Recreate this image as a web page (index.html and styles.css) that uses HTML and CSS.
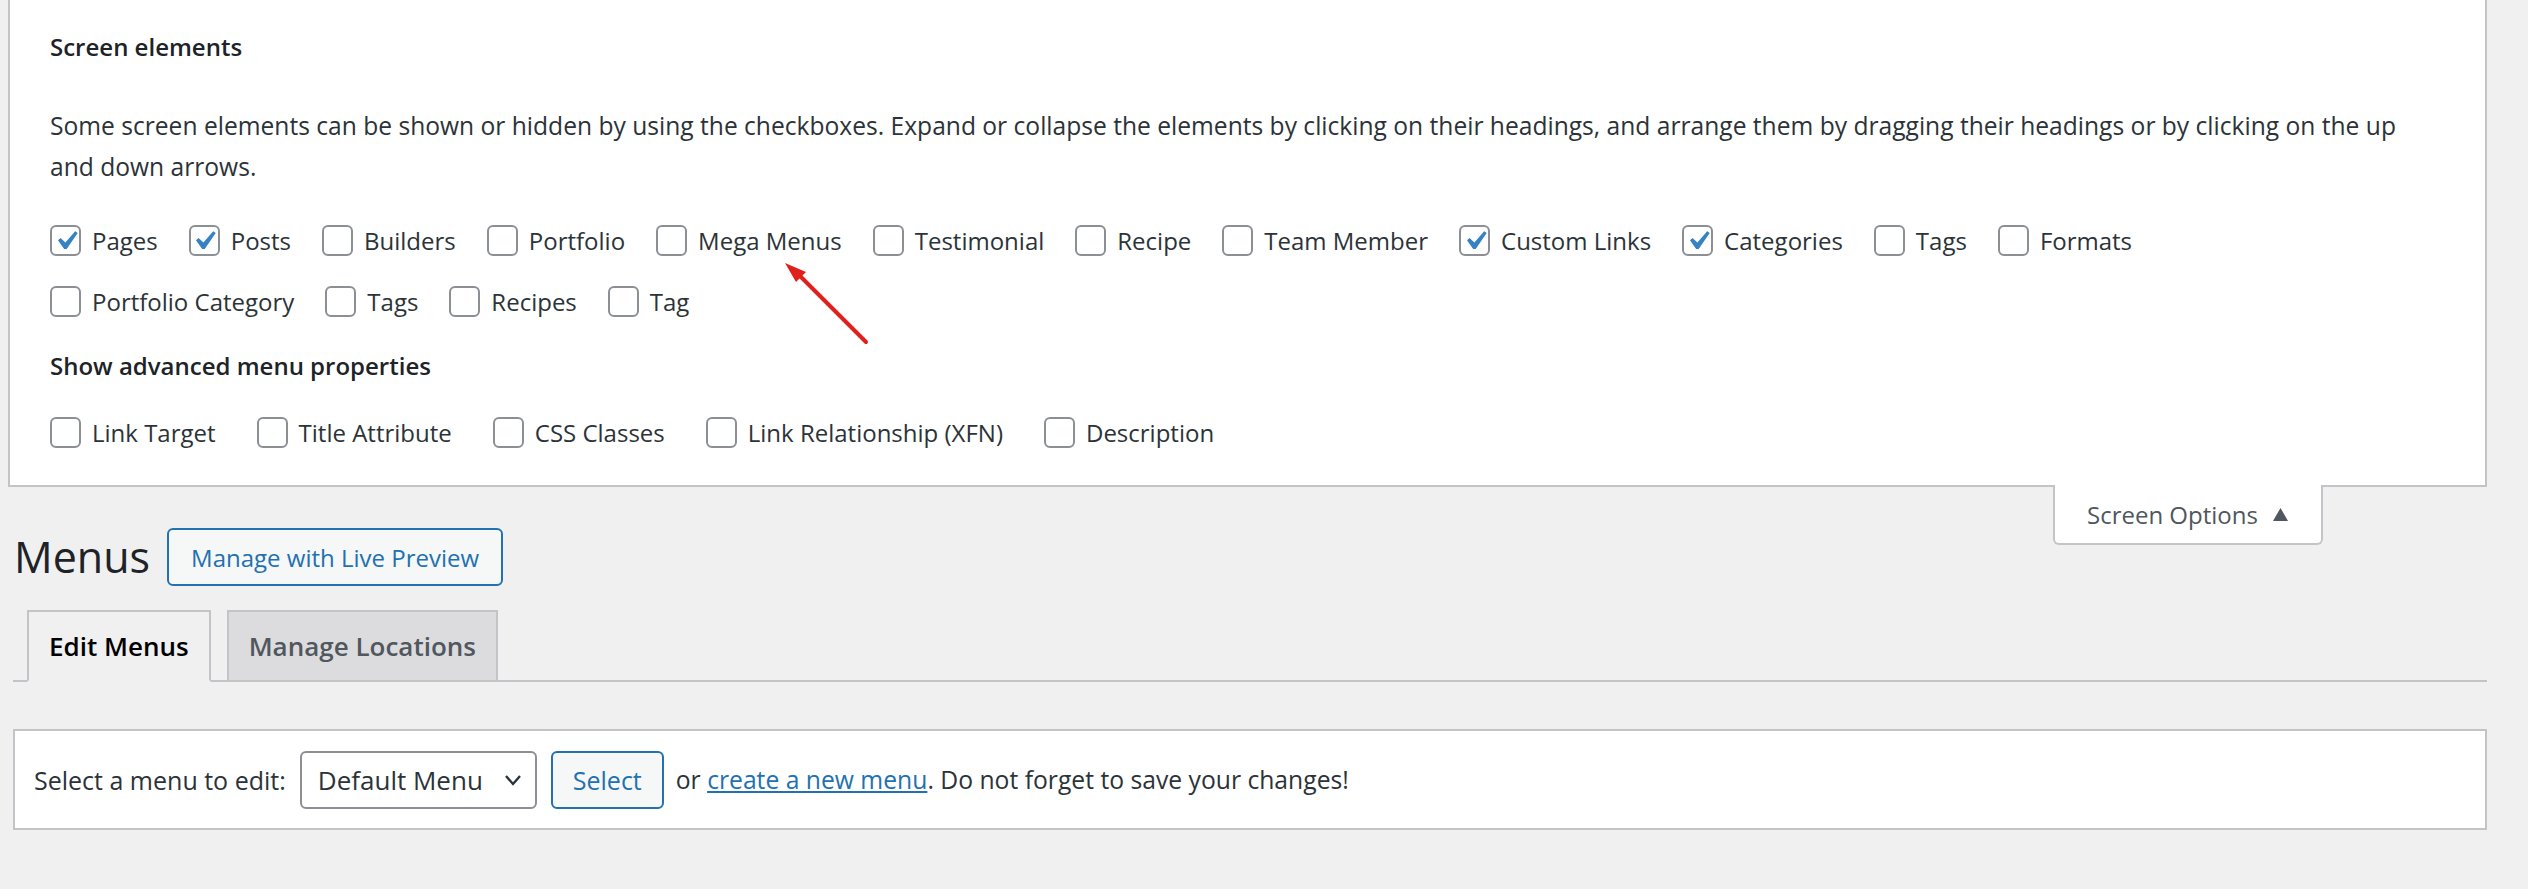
FILE: index.html
```html
<!DOCTYPE html>
<html lang="en">
<head>
<meta charset="utf-8">
<title>Menus</title>
<link rel="stylesheet" href="styles.css">
</head>
<body>
<div class="screen-meta">
  <div class="meta-inner">
    <h5 class="meta-title">Screen elements</h5>
    <p class="meta-desc">Some screen elements can be shown or hidden by using the checkboxes. Expand or collapse the elements by clicking on their headings, and arrange them by dragging their headings or by clicking on the up and down arrows.</p>
    <div class="prefs-row">
      <label class="pref"><span class="cb checked"><svg viewBox="0 0 20 20"><path d="M14.83 4.89l1.34.94-5.81 8.38H9.02L5.78 9.67l1.34-1.25 2.57 2.4z"/></svg></span>Pages</label>
      <label class="pref"><span class="cb checked"><svg viewBox="0 0 20 20"><path d="M14.83 4.89l1.34.94-5.81 8.38H9.02L5.78 9.67l1.34-1.25 2.57 2.4z"/></svg></span>Posts</label>
      <label class="pref"><span class="cb"></span>Builders</label>
      <label class="pref"><span class="cb"></span>Portfolio</label>
      <label class="pref"><span class="cb"></span>Mega Menus</label>
      <label class="pref"><span class="cb"></span>Testimonial</label>
      <label class="pref"><span class="cb"></span>Recipe</label>
      <label class="pref"><span class="cb"></span>Team Member</label>
      <label class="pref"><span class="cb checked"><svg viewBox="0 0 20 20"><path d="M14.83 4.89l1.34.94-5.81 8.38H9.02L5.78 9.67l1.34-1.25 2.57 2.4z"/></svg></span>Custom Links</label>
      <label class="pref"><span class="cb checked"><svg viewBox="0 0 20 20"><path d="M14.83 4.89l1.34.94-5.81 8.38H9.02L5.78 9.67l1.34-1.25 2.57 2.4z"/></svg></span>Categories</label>
      <label class="pref"><span class="cb"></span>Tags</label>
      <label class="pref"><span class="cb"></span>Formats</label>
    </div>
    <div class="prefs-row">
      <label class="pref"><span class="cb"></span>Portfolio Category</label>
      <label class="pref"><span class="cb"></span>Tags</label>
      <label class="pref"><span class="cb"></span>Recipes</label>
      <label class="pref"><span class="cb"></span>Tag</label>
    </div>
    <h5 class="meta-title adv">Show advanced menu properties</h5>
    <div class="prefs-row wide">
      <label class="pref"><span class="cb"></span>Link Target</label>
      <label class="pref"><span class="cb"></span>Title Attribute</label>
      <label class="pref"><span class="cb"></span>CSS Classes</label>
      <label class="pref"><span class="cb"></span>Link Relationship (XFN)</label>
      <label class="pref"><span class="cb"></span>Description</label>
    </div>
  </div>
</div>

<div class="screen-tab">Screen Options <svg class="tri" viewBox="0 0 15 13"><polygon points="7.5,0 15,13 0,13"/></svg></div>

<div class="wrap">
  <div class="heading-row">
    <h1 class="page-title">Menus</h1>
    <a class="btn-outline">Manage with Live Preview</a>
  </div>
  <div class="nav-tabs">
    <a class="nav-tab active">Edit Menus</a>
    <a class="nav-tab">Manage Locations</a>
  </div>
  <div class="manage-menus">
    <span class="sel-label">Select a menu to edit:</span>
    <span class="select-box">Default Menu <svg class="chev" viewBox="0 0 20 12"><polyline points="3,2 10,10 17,2"/></svg></span>
    <a class="btn-outline small">Select</a>
    <span class="sel-text">or <a class="link">create a new menu</a>. Do not forget to save your changes!</span>
  </div>
</div>

<svg class="annot-arrow" viewBox="0 0 110 100" width="110" height="100">
  <line x1="96" y1="92" x2="28" y2="24"/>
  <polygon points="15,13 36,22 26,32"/>
</svg>
</body>
</html>
```
FILE: styles.css
```css
html, body {
  margin: 0;
  padding: 0;
}
body {
  background: #f0f0f1;
  font-family: "Open Sans", "Noto Sans", sans-serif;
  color: #2c3338;
  font-size: 24px;
  position: relative;
  min-height: 889px;
}
.screen-meta {
  margin: 0 41px 0 8px;
  background: #fff;
  border: 2px solid #c3c4c7;
  border-top: none;
}
.meta-inner {
  padding: 27px 40px 22px 40px;
}
.meta-title {
  margin: 0;
  font-size: 24px;
  font-weight: 600;
  line-height: 40px;
  color: #1d2327;
}
.meta-title.adv {
  margin: 14px 0 16px;
}
.meta-desc {
  margin: 38px 0 23px;
  font-size: 24.6px;
  line-height: 41px;
  color: #2c3338;
}
.prefs-row {
  display: flex;
  align-items: center;
  gap: 31px;
  height: 61px;
}
.prefs-row.wide {
  gap: 41px;
}
.pref {
  display: flex;
  align-items: center;
  gap: 11px;
  white-space: nowrap;
}
.cb {
  box-sizing: border-box;
  width: 31px;
  height: 31px;
  border: 2px solid #8c8f94;
  border-radius: 6px;
  background: #fff;
  display: flex;
  align-items: center;
  justify-content: center;
}
.cb svg {
  width: 38px;
  height: 38px;
  fill: #3582c4;
  flex: none;
}
.screen-tab {
  float: right;
  margin: -2px 205px 0 0;
  box-sizing: border-box;
  width: 270px;
  height: 60px;
  background: #fff;
  border: 2px solid #c3c4c7;
  border-top: none;
  border-radius: 0 0 6px 6px;
  padding-left: 32px;
  display: flex;
  align-items: center;
  gap: 15px;
  color: #50575e;
  font-size: 24px;
}
.tri {
  width: 15px;
  height: 13px;
  fill: #50575e;
}
.wrap {
  padding: 41px 41px 0 13px;
}
.heading-row {
  display: flex;
  align-items: center;
  gap: 17px;
  height: 58px;
}
.page-title {
  margin: 0 0 0 1px;
  font-size: 43px;
  font-weight: 400;
  line-height: 58px;
  color: #1d2327;
}
.btn-outline {
  box-sizing: border-box;
  display: flex;
  align-items: center;
  height: 58px;
  padding: 0 22px;
  border: 2px solid #2271b1;
  border-radius: 6px;
  background: #f6f7f7;
  color: #2271b1;
  font-size: 24px;
  white-space: nowrap;
}
.btn-outline.small {
  padding: 0 20px;
  font-size: 25px;
}
.nav-tabs {
  margin-top: 24px;
  display: flex;
  gap: 16px;
  padding-left: 14px;
  border-bottom: 2px solid #c3c4c7;
}
.nav-tab {
  box-sizing: border-box;
  height: 72px;
  margin-bottom: -2px;
  padding: 0 20px;
  display: flex;
  align-items: center;
  border: 2px solid #c3c4c7;
  background: #dcdcde;
  color: #50575e;
  font-size: 26px;
  font-weight: 600;
  white-space: nowrap;
}
.nav-tab.active {
  background: #f0f0f1;
  color: #000;
  border-bottom-color: #f0f0f1;
}
.manage-menus {
  margin-top: 47px;
  box-sizing: border-box;
  height: 101px;
  background: #fff;
  border: 2px solid #c3c4c7;
  padding: 0 19px;
  display: flex;
  align-items: center;
  gap: 14px;
  font-size: 25px;
}
.select-box {
  box-sizing: border-box;
  height: 58px;
  width: 237px;
  border: 2px solid #8c8f94;
  border-radius: 6px;
  padding: 0 12px 0 16px;
  display: flex;
  align-items: center;
  justify-content: space-between;
  color: #2c3338;
  font-size: 26px;
  white-space: nowrap;
}
.chev {
  width: 20px;
  height: 12px;
  fill: none;
  stroke: #2c3338;
  stroke-width: 2.4;
}
.sel-text {
  margin-left: -2px;
  font-size: 24.7px;
  white-space: nowrap;
}
.link {
  color: #2271b1;
  text-decoration: underline;
}
.annot-arrow {
  position: absolute;
  left: 770px;
  top: 250px;
}
.annot-arrow line {
  stroke: #e0201b;
  stroke-width: 4;
  stroke-linecap: round;
}
.annot-arrow polygon {
  fill: #e0201b;
}
```
